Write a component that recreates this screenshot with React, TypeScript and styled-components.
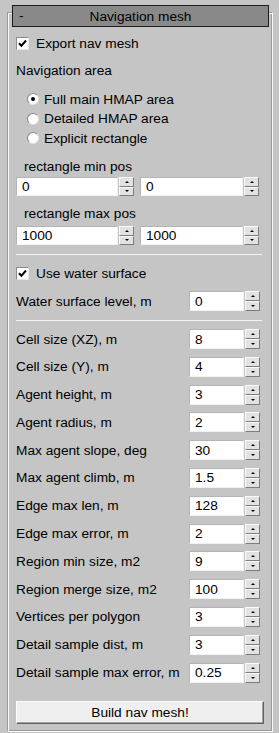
import styled, { createGlobalStyle } from "styled-components";

const GlobalStyle = createGlobalStyle`
  html, body {
    margin: 0;
    padding: 0;
    background: #c5c5c5;
  }
  body {
    font-family: "Liberation Sans", Arial, sans-serif;
    font-size: 13.7px;
    color: #000;
  }
`;

const Panel = styled.div`
  box-sizing: border-box;
  margin: 12px 0 0 7px;
  width: 266px;
  height: 720px;
  padding: 0 8px;
  display: flex;
  flex-direction: column;
  border: 1px solid;
  border-color: #9a9a9a #fafafa #fafafa #9a9a9a;
  box-shadow: inset 1px 1px 0 #fafafa, inset -1px -1px 0 #9a9a9a;
`;

const Header = styled.div`
  box-sizing: border-box;
  margin: -8px -5px 0 -4px;
  height: 22px;
  display: flex;
  align-items: center;
  justify-content: center;
  position: relative;
  background: #898989;
  border: 1px solid #1c1c1c;
  font-size: 13.7px;
`;

const Collapse = styled.span`
  position: absolute;
  left: 6px;
  top: 2px;
`;

const CheckRow = styled.label<{ $top: number }>`
  display: flex;
  align-items: center;
  gap: 7px;
  height: 20px;
  margin-top: ${(p) => p.$top}px;
`;

const CheckBox = styled.span`
  box-sizing: border-box;
  width: 13px;
  height: 13px;
  background: #fff;
  border: 1px solid;
  border-color: #8a8a8a #e6e6e6 #e6e6e6 #8a8a8a;
  display: flex;
  align-items: center;
  justify-content: center;
`;

const Text = styled.div<{ $top: number; $indent?: number; $h?: number }>`
  display: flex;
  align-items: center;
  height: ${(p) => p.$h ?? 20}px;
  margin-top: ${(p) => p.$top}px;
  padding-left: ${(p) => p.$indent ?? 0}px;
`;

const RadioGroup = styled.div`
  display: flex;
  flex-direction: column;
  margin-top: 9px;
  padding-left: 11px;
`;

const RadioRow = styled.label<{ $h: number }>`
  display: flex;
  align-items: center;
  gap: 5px;
  height: ${(p) => p.$h}px;
`;

const RadioDot = styled.span<{ $on?: boolean }>`
  box-sizing: border-box;
  width: 12px;
  height: 12px;
  border-radius: 50%;
  background: #fff;
  border: 1px solid;
  border-color: #8a8a8a #e2e2e2 #e2e2e2 #8a8a8a;
  display: flex;
  align-items: center;
  justify-content: center;
  &::after {
    content: "";
    width: 4px;
    height: 4px;
    border-radius: 50%;
    background: ${(p) => (p.$on ? "#000" : "transparent")};
  }
`;

const PairRow = styled.div<{ $top: number }>`
  display: flex;
  gap: 6px;
  height: 19px;
  margin-top: ${(p) => p.$top}px;
`;

const Spinner = styled.div<{ $w: number }>`
  display: flex;
  gap: 1px;
  width: ${(p) => p.$w}px;
  height: 100%;
`;

const Field = styled.input`
  box-sizing: border-box;
  flex: 1;
  min-width: 0;
  height: 100%;
  margin: 0;
  padding: 0 0 0 5px;
  background: #fff;
  border: 1px solid;
  border-color: #b4b4b4 #f2f2f2 #f2f2f2 #b4b4b4;
  font: inherit;
  color: #000;
  outline: none;
`;

const Arrows = styled.div`
  display: flex;
  flex-direction: column;
  width: 15px;
  height: 100%;
`;

const ArrowBtn = styled.span<{ $down?: boolean }>`
  box-sizing: border-box;
  flex: 1;
  display: flex;
  align-items: center;
  justify-content: center;
  background: #e2e2e2;
  border: 1px solid;
  border-color: #fafafa #7c7c7c #7c7c7c #fafafa;
  &::after {
    content: "";
    border-left: 2px solid transparent;
    border-right: 2px solid transparent;
    ${(p) =>
      p.$down ? "border-top: 2px solid #000;" : "border-bottom: 2px solid #000;"}
  }
`;

const Separator = styled.div<{ $top: number }>`
  height: 1px;
  margin: ${(p) => p.$top}px 2px 0 0;
  background: #f2f2f2;
`;

const ParamList = styled.div`
  display: flex;
  flex-direction: column;
  gap: 7.8px;
  margin-top: 8px;
`;

const ParamRow = styled.div<{ $top?: number }>`
  display: flex;
  align-items: center;
  justify-content: space-between;
  height: 20px;
  margin-top: ${(p) => p.$top ?? 0}px;
  padding-right: 4px;
`;

const BuildButton = styled.button`
  box-sizing: border-box;
  margin: 18px 0 0 0;
  height: 23px;
  width: 100%;
  padding: 0;
  background: #efefef;
  border: 1px solid;
  border-color: #fcfcfc #606060 #606060 #fcfcfc;
  box-shadow: inset -1px -1px 0 #a4a4a4;
  font: inherit;
  color: #000;
`;

function Check() {
  return (
    <CheckBox>
      <svg width="9" height="9" viewBox="0 0 9 9">
        <path d="M1 4.2 L3.4 6.8 L8 1.5" fill="none" stroke="#000" strokeWidth="2" />
      </svg>
    </CheckBox>
  );
}

function Spin({ value, w }: { value: string; w: number }) {
  return (
    <Spinner $w={w}>
      <Field defaultValue={value} />
      <Arrows>
        <ArrowBtn />
        <ArrowBtn $down />
      </Arrows>
    </Spinner>
  );
}

const params: [string, string][] = [
  ["Cell size (XZ), m", "8"],
  ["Cell size (Y), m", "4"],
  ["Agent height, m", "3"],
  ["Agent radius, m", "2"],
  ["Max agent slope, deg", "30"],
  ["Max agent climb, m", "1.5"],
  ["Edge max len, m", "128"],
  ["Edge max error, m", "2"],
  ["Region min size, m2", "9"],
  ["Region merge size, m2", "100"],
  ["Vertices per polygon", "3"],
  ["Detail sample dist, m", "3"],
  ["Detail sample max error, m", "0.25"],
];

export default function App() {
  return (
    <>
      <GlobalStyle />
      <Panel>
        <Header>
          <Collapse>-</Collapse>
          Navigation mesh
        </Header>
        <CheckRow $top={6}>
          <Check />
          Export nav mesh
        </CheckRow>
        <Text $top={7}>Navigation area</Text>
        <RadioGroup>
          <RadioRow $h={20}>
            <RadioDot $on />
            Full main HMAP area
          </RadioRow>
          <RadioRow $h={19}>
            <RadioDot />
            Detailed HMAP area
          </RadioRow>
          <RadioRow $h={20}>
            <RadioDot />
            Explicit rectangle
          </RadioRow>
        </RadioGroup>
        <Text $top={8} $indent={8}>
          rectangle min pos
        </Text>
        <PairRow $top={1}>
          <Spin value="0" w={118} />
          <Spin value="0" w={119} />
        </PairRow>
        <Text $top={7} $indent={8}>
          rectangle max pos
        </Text>
        <PairRow $top={3}>
          <Spin value="1000" w={118} />
          <Spin value="1000" w={119} />
        </PairRow>
        <Separator $top={9} />
        <CheckRow $top={8}>
          <Check />
          Use water surface
        </CheckRow>
        <ParamRow $top={8}>
          Water surface level, m
          <Spin value="0" w={71} />
        </ParamRow>
        <Separator $top={9} />
        <ParamList>
          {params.map(([label, value]) => (
            <ParamRow key={label}>
              {label}
              <Spin value={value} w={71} />
            </ParamRow>
          ))}
        </ParamList>
        <BuildButton>Build nav mesh!</BuildButton>
      </Panel>
    </>
  );
}
